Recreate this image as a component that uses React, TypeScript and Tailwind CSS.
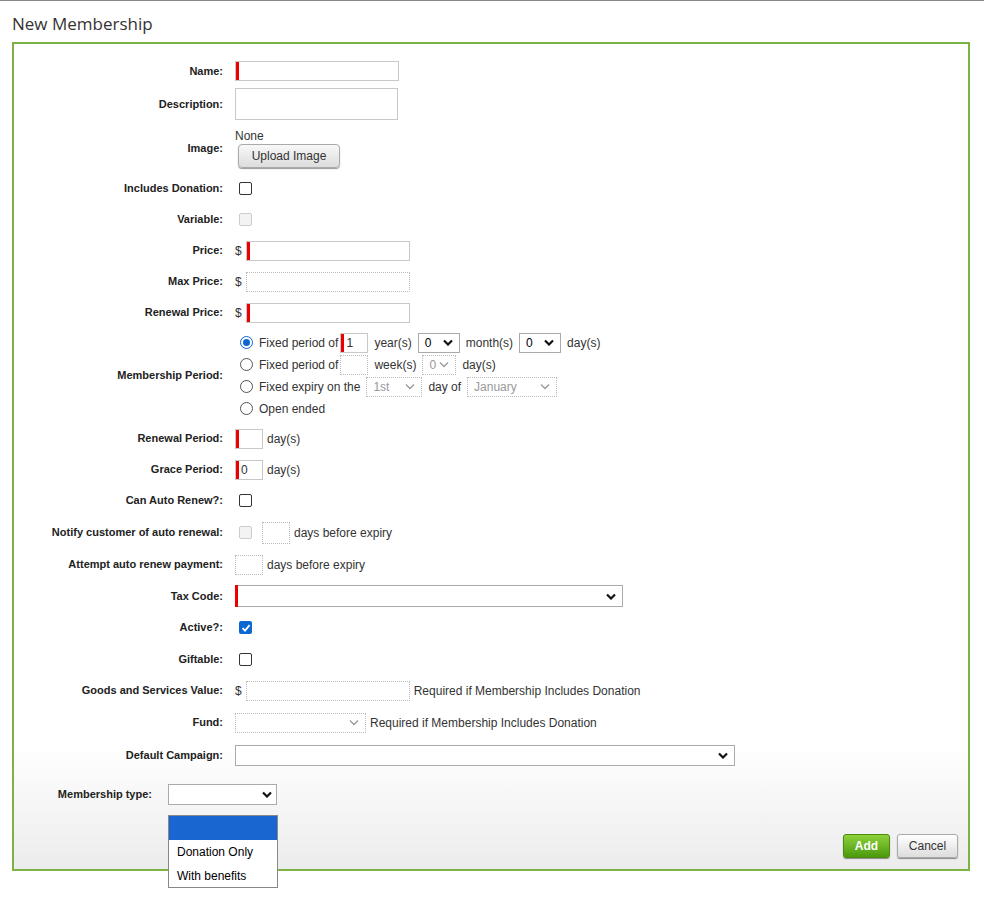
import React from "react";

const Req = () => <span className="absolute left-0 top-0 bottom-0 w-[3px] bg-[#e00]" />;

function TextIn({ w, req, val, dotted, h = 20 }: { w: number; req?: boolean; val?: string; dotted?: boolean; h?: number }) {
  return (
    <div
      className={`relative bg-white ${dotted ? "border border-dotted border-[#bbb]" : "border border-[#c8c8c8]"} text-[12px] flex items-center pl-[5px]`}
      style={{ width: w, height: h }}
    >
      {req && <Req />}
      {val}
    </div>
  );
}

function Sel({ w, val, disabled, h = 20 }: { w: number; val?: string; disabled?: boolean; h?: number }) {
  return (
    <div
      className={`relative bg-white flex items-center justify-between px-[6px] text-[12px] ${disabled ? "border border-dotted border-[#bbb] text-[#999]" : "border border-[#aaa] text-black"}`}
      style={{ width: w, height: h }}
    >
      <span>{val}</span>
      <svg width="10" height="7" viewBox="0 0 10 7">
        <path d="M1 1.5 L5 5.5 L9 1.5" fill="none" stroke={disabled ? "#999" : "#111"} strokeWidth={disabled ? 1.3 : 2.2} />
      </svg>
    </div>
  );
}

const Check = ({ on, disabled }: { on?: boolean; disabled?: boolean }) =>
  on ? (
    <div className="w-[13px] h-[13px] rounded-[2px] bg-[#0b68d1] flex items-center justify-center">
      <svg width="10" height="10" viewBox="0 0 10 10"><path d="M1.5 5.2 L4 7.6 L8.6 2.2" fill="none" stroke="white" strokeWidth="1.8" /></svg>
    </div>
  ) : (
    <div className={`w-[13px] h-[13px] rounded-[2px] border ${disabled ? "border-[#ccc] bg-[#f3f3f3]" : "border-[#333] bg-white"}`} />
  );

const Radio = ({ on }: { on?: boolean }) => (
  <div className={`w-[13px] h-[13px] rounded-full border ${on ? "border-[#0b68d1]" : "border-[#555]"} flex items-center justify-center bg-white`}>
    {on && <div className="w-[7px] h-[7px] rounded-full bg-[#0b68d1]" />}
  </div>
);

function Row({ label, h, children, top }: { label: string; h: number; children: React.ReactNode; top?: boolean }) {
  return (
    <div className="flex" style={{ height: h }}>
      <div className={`w-[209px] shrink-0 flex ${top ? "items-center" : "items-center"} justify-end text-[11px] font-bold text-[#222]`}>{label}</div>
      <div className="ml-[12px] flex items-center gap-[4px] text-[12px] text-[#333]">{children}</div>
    </div>
  );
}

export default function App() {
  return (
    <div className="w-[984px] h-[910px] bg-white border-t border-[#888]" style={{ fontFamily: '"Liberation Sans", Arial, sans-serif' }}>
      <div className="pl-[12px] pt-[10px] text-[17px] text-[#333] h-[41px]" style={{ fontFamily: '"Open Sans", sans-serif' }}>New Membership</div>
      <div className="relative mx-[12px] w-[958px] h-[829px] border-2 border-[#7cb342] bg-gradient-to-b from-white from-85% to-[#ececec]">
        <div className="pt-[16px]">
          <Row label="Name:" h={22}><TextIn w={164} req /></Row>
          <div className="h-[6px]" />
          <Row label="Description:" h={32}><TextIn w={163} h={32} /></Row>
          <div className="h-[8px]" />
          <Row label="Image:" h={40}>
            <div className="flex flex-col">
              <span className="text-[12px] leading-[14px]">None</span>
              <div className="mt-[1px] ml-[3px] w-[102px] h-[24px] rounded-[4px] border border-[#aaa] bg-gradient-to-b from-[#f8f8f8] to-[#ddd] shadow-[0_1px_1px_#999] flex items-center justify-center text-[12px] text-[#333]">Upload Image</div>
            </div>
          </Row>
          <div className="h-[5px]" />
          <Row label="Includes Donation:" h={31}><span className="ml-[4px]"><Check /></span></Row>
          <Row label="Variable:" h={31}><span className="ml-[4px]"><Check disabled /></span></Row>
          <Row label="Price:" h={31}>$<TextIn w={164} req /></Row>
          <Row label="Max Price:" h={31}>$<TextIn w={164} dotted /></Row>
          <Row label="Renewal Price:" h={31}>$<TextIn w={164} req /></Row>
          <Row label="Membership Period:" h={95}>
            <div className="flex flex-col gap-[2px] ml-[5px]">
              <div className="flex items-center gap-[6px] h-[20px]"><Radio on /><span>Fixed period of</span><span className="-ml-[4px]"><TextIn w={28} req val="1" /></span><span className="ml-[0px]">year(s)</span><Sel w={42} val="0" /><span>month(s)</span><Sel w={42} val="0" /><span>day(s)</span></div>
              <div className="flex items-center gap-[6px] h-[20px]"><Radio /><span>Fixed period of</span><span className="-ml-[4px]"><TextIn w={28} dotted /></span><span>week(s)</span><Sel w={34} val="0" disabled /><span>day(s)</span></div>
              <div className="flex items-center gap-[6px] h-[20px]"><Radio /><span>Fixed expiry on the</span><Sel w={56} val="1st" disabled /><span>day of</span><Sel w={90} val="January" disabled /></div>
              <div className="flex items-center gap-[6px] h-[20px]"><Radio /><span>Open ended</span></div>
            </div>
          </Row>
          <Row label="Renewal Period:" h={31}><TextIn w={28} req /><span>day(s)</span></Row>
          <Row label="Grace Period:" h={31}><TextIn w={28} req val="0" /><span>day(s)</span></Row>
          <Row label="Can Auto Renew?:" h={31}><span className="ml-[4px]"><Check /></span></Row>
          <Row label="Notify customer of auto renewal:" h={33}><span className="ml-[4px] mr-[6px]"><Check disabled /></span><TextIn w={28} dotted h={22} /><span>days before expiry</span></Row>
          <Row label="Attempt auto renew payment:" h={31}><TextIn w={28} dotted /><span>days before expiry</span></Row>
          <Row label="Tax Code:" h={32}><div className="relative"><Sel w={388} h={22} /><Req /></div></Row>
          <Row label="Active?:" h={31}><span className="ml-[4px]"><Check on /></span></Row>
          <Row label="Giftable:" h={32}><span className="ml-[4px]"><Check /></span></Row>
          <Row label="Goods and Services Value:" h={31}>$<TextIn w={164} dotted /><span>Required if Membership Includes Donation</span></Row>
          <Row label="Fund:" h={33}><Sel w={131} disabled /><span>Required if Membership Includes Donation</span></Row>
          <Row label="Default Campaign:" h={33}><Sel w={500} h={21} /></Row>
          <div className="h-[12px]" />
          <div className="flex h-[22px] items-start">
            <div className="w-[138px] text-right text-[11px] font-bold text-[#222] pt-[2px]">Membership type:</div>
            <div className="ml-[16px] w-[109px] h-[21px] border border-[#aaa] bg-white flex items-center justify-end pr-[4px]">
              <svg width="10" height="7" viewBox="0 0 10 7"><path d="M1 1.5 L5 5.5 L9 1.5" fill="none" stroke="#111" strokeWidth="2.2" /></svg>
            </div>
          </div>
        </div>
        <div className="absolute left-[154px] top-[771px] w-[110px] bg-white border border-[#888] text-[12px] text-black z-10">
          <div className="h-[24px] bg-[#1a66d0]" />
          <div className="h-[24px] flex items-center pl-[8px]">Donation Only</div>
          <div className="h-[23px] flex items-center pl-[8px]">With benefits</div>
        </div>
        <div className="absolute right-[10px] bottom-[11px] flex gap-[7px]">
          <div className="w-[47px] h-[24px] rounded-[3px] border border-[#4f8a10] bg-gradient-to-b from-[#8ed23a] to-[#4a9a0a] text-white text-[12px] font-bold flex items-center justify-center shadow-[0_1px_1px_#888]">Add</div>
          <div className="w-[61px] h-[24px] rounded-[3px] border border-[#aaa] bg-gradient-to-b from-white to-[#ddd] text-[#333] text-[12px] flex items-center justify-center shadow-[0_1px_1px_#888]">Cancel</div>
        </div>
      </div>
    </div>
  );
}
